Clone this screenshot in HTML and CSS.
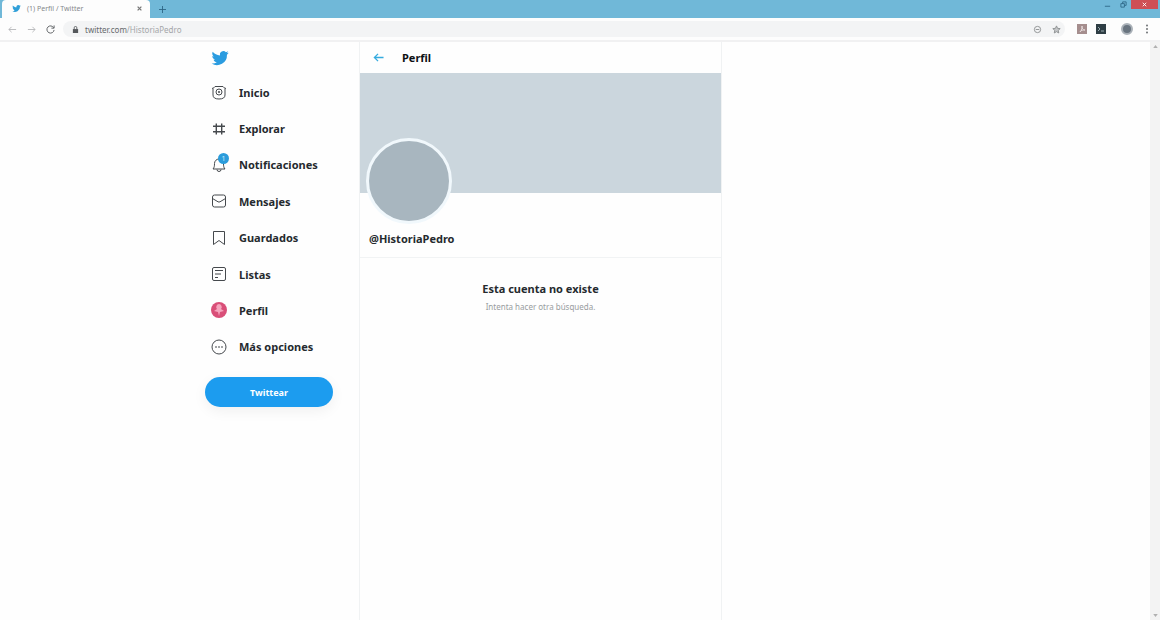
FILE: index.html
```html
<!DOCTYPE html>
<html lang="es">
<head>
    <meta charset="utf-8">
    <title>(1) Perfil / Twitter</title>
    <link rel="stylesheet" href="styles.css">
</head>
<body>
    <!-- browser window -->
    <div class="tab-bar">
        <div class="tab">
            <svg class="tab-logo" viewBox="0 0 24 24"><path d="M23.6 4.9c-.8.4-1.700.6-2.700.8 1-.6 1.700-1.500 2-2.600-.9.5-1.900.9-3 1.100a4.700 4.700 0 0 0-8 4.300C8 8.300 4.600 6.500 2.300 3.700c-1.300 2.200-.6 4.900 1.500 6.300-.8 0-1.500-.2-2.100-.6 0 2.300 1.600 4.200 3.800 4.700-.7.2-1.400.2-2.100.1.600 1.900 2.300 3.200 4.400 3.300A9.500 9.500 0 0 1 .8 19.400 13.400 13.400 0 0 0 21.300 7.500c.9-.7 1.700-1.600 2.300-2.600z"/></svg>
            <span class="tab-title">(1) Perfil / Twitter</span>
            <button class="tab-close" aria-label="Cerrar"><svg viewBox="0 0 8 8"><path d="M1 1l6 6M7 1L1 7"/></svg></button>
        </div>
        <button class="new-tab" aria-label="Nueva">
            <svg viewBox="0 0 8 8"><path d="M4 0v8M0 4h8"/></svg>
        </button>
        <div class="window-buttons">
            <button class="minimize" aria-label="Minimizar"><svg viewBox="0 0 8 8"><path d="M1 6h6"/></svg></button>
            <button class="maximize" aria-label="Restaurar"><svg viewBox="0 0 8 8"><path d="M1 3h4v4H1zM3 3V1h4v4H5"/></svg></button>
            <button class="close" aria-label="Salir"><svg viewBox="0 0 8 8"><path d="M2 2l4 4M6 2L2 6"/></svg></button>
        </div>
    </div>

    <div class="toolbar">
        <div class="history">
            <button class="faded" aria-label="Anterior"><svg viewBox="0 0 10 10"><path d="M9 5H1M4 2L1 5l3 3"/></svg></button>
            <button class="faded" aria-label="Siguiente"><svg viewBox="0 0 10 10"><path d="M1 5h8M6 2l3 3-3 3"/></svg></button>
            <button aria-label="Recargar"><svg viewBox="0 0 10 10"><path d="M8.500 3A4 4 0 1 0 9 5.500M9 .5V3.500H6"/></svg></button>
        </div>
        <div class="address">
            <svg class="lock" viewBox="0 0 8 8"><path d="M1 3.500h6V8H1z"/><path class="shackle" d="M2.500 4V2a1.500 1.500 0 0 1 3 0v2"/></svg>
            <span class="url">twitter.com<span class="path">/HistoriaPedro</span></span>
            <svg class="mark" viewBox="0 0 10 10"><circle cx="5" cy="5" r="3.500"/><path d="M3 5h4"/></svg>
            <svg class="mark star" viewBox="0 0 10 10"><path d="M5 1l1.200 2.700 2.900.3-2.200 2 .6 2.900L5 7.400 2.500 8.900l.6-2.900-2.200-2 2.900-.3z"/></svg>
        </div>
        <div class="extensions">
            <svg viewBox="0 0 10 10"><path fill="#a58e8e" d="M0 0h10v10H0z"/><path d="M3 8c2-2 2-5 2-6 0 3 1 4 3 4-2 0-4 0-5 2z" fill="none" stroke="#e5dada"/></svg>
            <svg viewBox="0 0 10 10"><path fill="#2f3e45" d="M0 0h10v10H0z"/><path d="M2 3l2 2-2 2M5 7h3" fill="none" stroke="#9aabb0"/></svg>
            <span class="user"></span>
            <svg class="dots" viewBox="0 0 10 10"><circle cx="5" cy="1.500" r="1"/><circle cx="5" cy="5" r="1"/><circle cx="5" cy="8.500" r="1"/></svg>
        </div>
    </div>

    <!-- twitter -->
    <div class="page">
        <header class="sidebar">
            <div class="menu">
                <a href="#" class="logo" aria-label="Twitter">
                    <svg viewBox="0 0 24 24"><path d="M23.6 4.9c-.8.4-1.700.6-2.700.8 1-.6 1.700-1.500 2-2.600-.9.5-1.900.9-3 1.100a4.700 4.700 0 0 0-8 4.300C8 8.300 4.600 6.500 2.300 3.700c-1.300 2.200-.6 4.900 1.500 6.300-.8 0-1.500-.2-2.100-.6 0 2.300 1.600 4.200 3.800 4.700-.7.2-1.400.2-2.100.1.600 1.900 2.300 3.200 4.400 3.300A9.500 9.500 0 0 1 .8 19.400 13.400 13.400 0 0 0 21.300 7.500c.9-.7 1.700-1.600 2.300-2.600z"/></svg>
                </a>
                <nav>
                    <a href="#">
                        <svg viewBox="0 0 16 16"><path d="M1 4.500q2-.3 3-2h8q1 1.700 3 2M2 4.500V11q0 4 6 4t6-4V4.500"/><circle cx="8" cy="8" r="3"/><circle cx="8" cy="8" r=".7"/></svg>
                        <span>Inicio</span>
                    </a>
                    <a href="#">
                        <svg class="hash" viewBox="0 0 16 16"><path d="M5.300 2.500v11M10.700 2.500v11M2 5.300h12M2 10.700h12"/></svg>
                        <span>Explorar</span>
                    </a>
                    <a href="#">
                        <span class="bell">
                            <svg viewBox="0 0 16 16"><path d="M2 12c1.300-1.500 1.500-3 1.500-5.500a4.500 4.500 0 0 1 9 0c0 2.500.2 4 1.500 5.500zM6 12.500a2 2 0 0 0 4 0"/></svg>
                            <span class="badge">1</span>
                        </span>
                        <span>Notificaciones</span>
                    </a>
                    <a href="#">
                        <svg viewBox="0 0 16 16"><rect x="1.500" y="2" width="13" height="12" rx="2"/><path d="M1.500 5.500L7 8.800q1 .5 2 0l5.500-3.300"/></svg>
                        <span>Mensajes</span>
                    </a>
                    <a href="#">
                        <svg viewBox="0 0 16 16"><path d="M2.500 1.500h11v13L8 10.500l-5.500 4z"/></svg>
                        <span>Guardados</span>
                    </a>
                    <a href="#">
                        <svg viewBox="0 0 16 16"><rect x="1.500" y="1.500" width="13" height="13" rx="1.500"/><path d="M4 4.500h8M4 8h6M4 11.500h3"/></svg>
                        <span>Listas</span>
                    </a>
                    <a href="#">
                        <svg class="me" viewBox="0 0 16 16"><circle cx="8" cy="8" r="8" fill="#d94f78"/><path d="M8 2a3 3 0 0 1 2 5l3 2-4 1-1 4-1-4-4-1 3-2a3 3 0 0 1 2-5z" fill="#f5a5bd"/></svg>
                        <span>Perfil</span>
                    </a>
                    <a href="#">
                        <svg viewBox="0 0 16 16"><circle cx="8" cy="8" r="7"/><path d="M4 8h2M7 8h2M10 8h2"/></svg>
                        <span>Más opciones</span>
                    </a>
                </nav>
                <button class="tweet">Twittear</button>
            </div>
        </header>

        <main>
            <div class="title-bar">
                <a href="#" class="back" aria-label="Volver"><svg viewBox="0 0 12 12"><path d="M11.500 6H1.500M5.500 2l-4 4 4 4"/></svg></a>
                <h1>Perfil</h1>
            </div>
            <div class="cover"></div>
            <div class="profile">
                <div class="avatar"></div>
                <h2>@HistoriaPedro</h2>
            </div>
            <div class="empty">
                <h3>Esta cuenta no existe</h3>
                <p>Intenta hacer otra búsqueda.</p>
            </div>
        </main>

        <div class="scrollbar">
            <svg viewBox="0 0 6 4"><path d="M0 4l3-4 3 4z"/></svg>
            <svg viewBox="0 0 6 4"><path d="M0 0l3 4 3-4z"/></svg>
        </div>
    </div>
</body>
</html>
```
FILE: styles.css
```css
* {
    box-sizing: border-box;
}

body {
    margin: 0;
    min-height: 100vh;
    display: flex;
    flex-direction: column;
    background-color: #fefefe;
    color: #252a2e;
    font-family: "Noto Sans", "Open Sans", sans-serif;
    font-size: 11px;
}

a {
    color: inherit;
    text-decoration: none;
}

button {
    padding: 0;
    border: none;
    background: none;
    font-family: inherit;
    cursor: pointer;
}

svg {
    display: block;
    flex-shrink: 0;
}

h1,
h2,
h3,
p {
    margin: 0;
}

/* browser window */
.tab-bar {
    display: flex;
    height: 18px;
    background-color: #70b8d8;
}

.tab {
    display: flex;
    align-items: center;
    width: 148px;
    margin-left: 2px;
    padding: 0 8px 2px 10px;
    background-color: #fdfdfd;
    border-radius: 4px 4px 0 0;
}

.tab-logo {
    width: 9px;
    height: 9px;
    fill: #2f9fd8;
}

.tab-title {
    flex: 1;
    margin-left: 6px;
    color: #85888b;
    font-size: 7px;
}

.tab-close svg {
    width: 5px;
    height: 5px;
    stroke: #777;
    stroke-width: 2;
}

.new-tab {
    margin-left: 9px;
}

.new-tab svg {
    width: 7px;
    height: 7px;
    stroke: #2b6483;
    stroke-width: 1;
}

.window-buttons {
    display: flex;
    align-items: flex-start;
    margin-left: auto;
    margin-right: 2px;
}

.window-buttons button {
    display: flex;
    align-items: center;
    justify-content: center;
    width: 16px;
    height: 9px;
}

.window-buttons .close {
    width: 27px;
    background-color: #cf4f55;
}

.window-buttons svg {
    width: 7px;
    height: 7px;
    fill: none;
    stroke: #2d6787;
    stroke-width: 1;
}

.window-buttons .close svg {
    stroke: #fff;
}

.toolbar {
    display: flex;
    align-items: center;
    height: 24px;
    padding: 0 8px;
    background-color: #fdfdfd;
    border-bottom: 2px solid #f1f1f2;
}

.history {
    display: flex;
    gap: 10px;
}

.history svg {
    width: 9px;
    height: 9px;
    fill: none;
    stroke: #55585b;
    stroke-width: 1;
}

.history .faded svg {
    stroke: #b5b7b9;
}

.address {
    display: flex;
    flex: 1;
    align-items: center;
    height: 16px;
    margin: 0 12px 0 8px;
    padding: 0 4px 0 9px;
    background-color: #f3f4f5;
    border-radius: 8px;
}

.lock {
    width: 7px;
    height: 7px;
    fill: #55585b;
}

.lock .shackle {
    fill: none;
    stroke: #55585b;
}

.url {
    flex: 1;
    margin-left: 6px;
    color: #66696c;
    font-size: 8px;
}

.url .path {
    color: #a4a6a8;
}

.mark {
    width: 9px;
    height: 9px;
    margin-left: 10px;
    fill: none;
    stroke: #8b8e90;
}

.star {
    fill: #c5c7c9;
}

.extensions {
    display: flex;
    align-items: center;
    gap: 9px;
}

.extensions svg {
    width: 10px;
    height: 10px;
}

.extensions .user {
    width: 12px;
    height: 12px;
    margin-left: 6px;
    border: 2px solid #aab1b8;
    border-radius: 50%;
    background-color: #69747f;
}

.extensions .dots {
    fill: #707376;
}

/* page */
.page {
    display: grid;
    grid-template-columns: 359fr 363px 428fr 10px;
    flex: 1;
}

.sidebar {
    display: flex;
    justify-content: flex-end;
}

.menu {
    width: 154px;
    padding: 7px 26px 0 0;
}

.logo {
    display: block;
    margin-left: 6px;
}

.logo svg {
    width: 18px;
    height: 18px;
    fill: #2b9ce0;
}

nav {
    display: grid;
    grid-auto-rows: 1fr;
    height: 291px;
    margin: 7px 0 12px 6px;
}

nav a {
    display: flex;
    align-items: center;
    gap: 12px;
    font-weight: bold;
}

nav svg {
    width: 16px;
    height: 16px;
    fill: none;
    stroke: #45494d;
    stroke-width: 1;
}

nav .hash {
    stroke-width: 1.4;
}

nav .me {
    stroke: none;
}

.bell {
    position: relative;
}

.badge {
    position: absolute;
    top: -4px;
    right: -2px;
    width: 11px;
    height: 11px;
    border-radius: 50%;
    background-color: #2b9cdb;
    color: #d3ecfa;
    font-size: 7px;
    font-weight: normal;
    line-height: 11px;
    text-align: center;
}

.tweet {
    display: block;
    width: 100%;
    height: 30px;
    border-radius: 15px;
    background-color: #1c9cef;
    box-shadow: 0 4px 14px rgba(0, 0, 0, 0.06);
    color: #fff;
    font-size: 9px;
    font-weight: bold;
}

main {
    border: solid #f0f2f3;
    border-width: 0 1px;
}

.title-bar {
    display: flex;
    align-items: center;
    gap: 18px;
    height: 31px;
    padding-left: 13px;
}

.back svg {
    width: 11px;
    height: 11px;
    fill: none;
    stroke: #35abdf;
    stroke-width: 1.4;
}

h1 {
    font-size: 11px;
    color: #0d1013;
}

.cover {
    height: 120px;
    background-color: #cbd6dd;
}

.profile {
    display: flow-root;
    height: 65px;
    padding-left: 9px;
    border-bottom: 1px solid #f1f3f4;
}

.avatar {
    width: 86px;
    height: 86px;
    margin: -55px 0 7px -3px;
    border: 3px solid #f1f8fc;
    border-radius: 50%;
    background-color: #a8b6bf;
}

h2,
h3 {
    font-size: 11px;
    line-height: 16px;
}

.empty {
    padding-top: 23px;
    text-align: center;
}

.empty p {
    margin-top: 4px;
    color: #999da0;
    font-size: 8px;
    line-height: 12px;
}

.scrollbar {
    grid-column: 4;
    display: flex;
    flex-direction: column;
    align-items: center;
    justify-content: space-between;
    padding: 3px 0;
    background-color: #f3f3f3;
}

.scrollbar svg {
    width: 5px;
    height: 3px;
    fill: #b0b0b0;
}
```
